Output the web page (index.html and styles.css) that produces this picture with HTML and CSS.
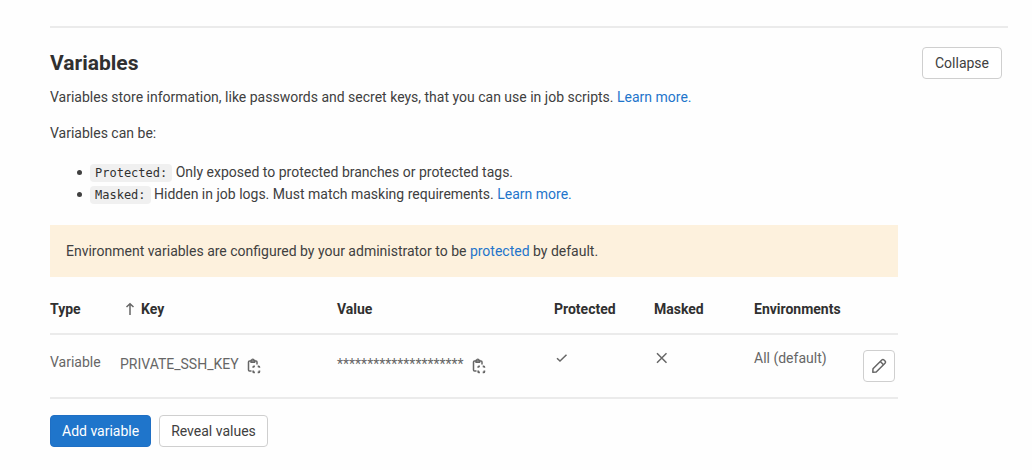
FILE: index.html
```html
<!DOCTYPE html>
<html lang="en">
<head>
<meta charset="utf-8">
<meta name="viewport" content="width=device-width, initial-scale=1">
<title>Variables</title>
<link rel="stylesheet" href="styles.css">
</head>
<body>
<svg class="sprite" aria-hidden="true">
  <symbol id="copy" viewBox="0 0 16 16" fill="none" stroke="currentColor" stroke-width="1.5">
    <path d="M4.500 13H2.500Q1.500 13 1.500 12V4Q1.500 3 2.500 3H9Q10 3 10 4V6.500"/>
    <path d="M4 4.300V2.300H4.600A1.200 1.200 0 0 1 7 2.300H7.600V4.300Z" stroke-width="1.300"/>
    <path d="M6.200 9.800V9Q6.200 8.300 6.900 8.300H7.900M10.700 8.300H11.700Q12.400 8.300 12.400 9V9.800M12.400 12.400V13.700Q12.400 14.400 11.700 14.400H10.700M7.900 14.400H6.900Q6.200 14.400 6.200 13.700V12.400" stroke-width="1.700"/>
  </symbol>
</svg>
<main class="page">
  <section class="settings">
    <div class="content">
      <h1 class="title">Variables</h1>
      <p class="intro">Variables store information, like passwords and secret keys, that you can use in job scripts. <a href="#">Learn more.</a></p>
      <p class="lead">Variables can be:</p>
      <ul class="list">
        <li><code>Protected:</code> Only exposed to protected branches or protected tags.</li>
        <li><code>Masked:</code> Hidden in job logs. Must match masking requirements. <a href="#">Learn more.</a></li>
      </ul>
      <div class="notice">Environment variables are configured by your administrator to be <a href="#">protected</a> by default.</div>
      <table class="variables">
        <thead>
          <tr>
            <th class="col-type" scope="col">Type</th>
            <th scope="col"><span class="sorted"><svg width="10" height="14" viewBox="0 0 10 14" fill="none" stroke="currentColor" stroke-width="1.500" aria-hidden="true"><path d="M5 13V2M1.500 5L5 1.700L8.500 5"/></svg>Key</span></th>
            <th scope="col">Value</th>
            <th class="col-flag" scope="col">Protected</th>
            <th class="col-flag" scope="col">Masked</th>
            <th class="col-env" scope="col">Environments</th>
            <th class="col-edit"></th>
          </tr>
        </thead>
        <tbody>
          <tr>
            <td class="type">Variable</td>
            <td><div class="copyable"><span>PRIVATE_SSH_KEY</span><button class="copy" type="button" aria-label="Copy key"><svg width="16" height="16"><use href="#copy"/></svg></button></div></td>
            <td><div class="copyable"><span>*********************</span><button class="copy" type="button" aria-label="Copy value"><svg width="16" height="16"><use href="#copy"/></svg></button></div></td>
            <td><svg class="mark" width="16" height="16" viewBox="0 0 16 16" fill="none" stroke="currentColor" stroke-width="1.500" role="img" aria-label="Yes"><path d="M3 8.200L6 11L12.500 4.800"/></svg></td>
            <td><svg class="mark" width="16" height="16" viewBox="0 0 16 16" fill="none" stroke="currentColor" stroke-width="1.500" role="img" aria-label="No"><path d="M3 3.300L12.500 12.800M12.500 3.300L3 12.800"/></svg></td>
            <td class="env">All (default)</td>
            <td><button class="btn edit" type="button" aria-label="Edit"><svg width="16" height="16" viewBox="0 0 16 16" fill="none" stroke="currentColor" stroke-width="1.500" stroke-linejoin="round" aria-hidden="true"><path d="M1.800 14.200L2 10.800L10.800 2Q11.900 1 13 2L14 3Q15 4.100 14 5.200L5.200 14Z"/><path d="M9.300 3.500L12.500 6.700"/></svg></button></td>
          </tr>
        </tbody>
      </table>
      <div class="actions">
        <button class="btn primary" type="button">Add variable</button>
        <button class="btn" type="button">Reveal values</button>
      </div>
    </div>
    <button class="btn" type="button">Collapse</button>
  </section>
</main>
</body>
</html>
```
FILE: styles.css
```css
* {
  box-sizing: border-box;
}

body {
  margin: 0;
  background: #fefefe;
  color: #404040;
  font: 14px/20px Roboto, "Noto Sans", sans-serif;
}

.sprite {
  display: block;
  width: 0;
  height: 0;
}

.page {
  padding: 26px 24px 20px 50px;
}

.settings {
  display: flex;
  align-items: flex-start;
  gap: 24px;
  padding: 19px 6px 0 0;
  border-top: 2px solid #ebebeb;
}

.content {
  flex: 1;
  min-width: 0;
}

a {
  color: #1f75cb;
  text-decoration: none;
}

.title {
  margin: 0;
  color: #303030;
  font-size: 21px;
  font-weight: 700;
  line-height: 32px;
}

.intro {
  margin: 8px 0 16px;
}

.lead {
  margin: 0 0 18px;
}

.list {
  margin: 0 0 20px;
  padding-left: 40px;
  line-height: 22px;
  list-style: none;
}

.list li::before {
  content: "";
  display: inline-block;
  width: 5px;
  height: 5px;
  margin: 0 8px 0 -13px;
  border-radius: 50%;
  background: #404040;
  vertical-align: 2px;
}

.list code {
  padding: 2px 5px;
  border-radius: 4px;
  background: #f0f0f0;
  color: #303030;
  font: 12px/16px "DejaVu Sans Mono", monospace;
}

.notice {
  padding: 16px;
  background: #fdf1dd;
}

.variables {
  width: 100%;
  border-collapse: collapse;
  table-layout: fixed;
}

.variables th {
  padding: 22px 0 14px;
  border-bottom: 2px solid #ebebeb;
  color: #303030;
  font-weight: 700;
  text-align: left;
}

.variables td {
  padding: 15px 0;
  border-bottom: 2px solid #ebebeb;
  color: #666;
  vertical-align: top;
}

.col-type {
  width: 70px;
}

.col-flag {
  width: 100px;
}

.col-env {
  width: 109px;
}

.col-edit {
  width: 35px;
}

.sorted {
  display: flex;
  align-items: center;
  gap: 6px;
  padding-left: 5px;
}

.sorted svg {
  color: #666;
}

.variables .type {
  line-height: 24px;
}

.variables .env {
  line-height: 16px;
}

.copyable {
  display: flex;
  align-items: center;
  gap: 8px;
  height: 28px;
}

.copy {
  display: flex;
  padding: 4px 0 0;
  border: 0;
  background: none;
  color: #666;
}

.mark {
  display: block;
}

.btn {
  min-width: 80px;
  height: 32px;
  padding: 0 11px;
  border: 1px solid #cfcfcf;
  border-radius: 4px;
  background: #fff;
  color: #404040;
  font: inherit;
  white-space: nowrap;
}

.primary {
  border-color: #1f6fc4;
  background: #1f75cb;
  color: #fff;
}

.edit {
  display: flex;
  align-items: center;
  justify-content: center;
  width: 32px;
  min-width: 0;
  padding: 0;
  color: #666;
}

.actions {
  display: flex;
  gap: 8px;
  padding-top: 16px;
}
```
